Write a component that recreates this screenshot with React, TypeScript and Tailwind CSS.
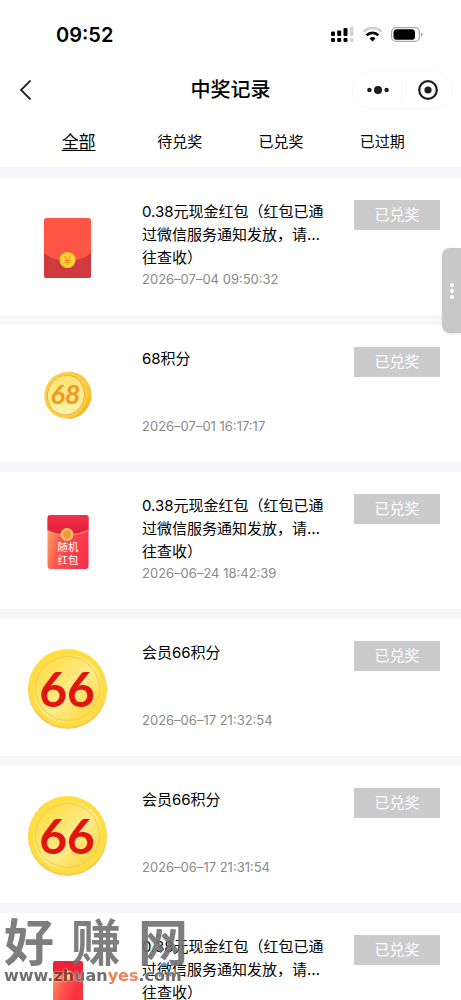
import React from 'react';

const tabs = ['全部', '待兑奖', '已兑奖', '已过期'];

type Prize = {
  icon: React.ReactNode;
  title: React.ReactNode;
  time: string;
};

function StatusIcons() {
  return (
    <svg width="92" height="18" viewBox="0 0 92 18" aria-hidden="true">
      {/* dual sim signal */}
      <g fill="#000">
        <rect x="0" y="5.5" width="4" height="4.5" rx="1" />
        <rect x="6.2" y="4.5" width="4" height="5.5" rx="1" />
        <rect x="12.5" y="2" width="4" height="8" rx="1" />
        <rect x="0" y="12" width="4" height="4" rx="1" />
        <rect x="6.2" y="12" width="4" height="4" rx="1" />
        <rect x="12.5" y="12" width="4" height="4" rx="1" />
      </g>
      <g fill="#d4d4d4">
        <rect x="18.8" y="0.5" width="3.6" height="9.5" rx="1" />
        <rect x="18.8" y="12" width="3.6" height="4" rx="1" />
      </g>
      {/* wifi */}
      <g fill="none" strokeWidth="2.6">
        <path d="M32.4 5.8a12.8 12.8 0 0 1 18.2 0" stroke="#cfcfcf" />
        <path d="M35.6 9.4a8.2 8.2 0 0 1 11.8 0" stroke="#000" />
      </g>
      <path d="M41.5 15.4l-3-3a4.3 4.3 0 0 1 6 0z" fill="#000" />
      {/* battery */}
      <rect x="60.6" y="1.6" width="27.8" height="13.8" rx="4.5" fill="none" stroke="#a8a8a8" strokeWidth="1.2" />
      <rect x="62.5" y="3.2" width="21.5" height="10.6" rx="3.4" fill="#000" />
      <path d="M90 6.5q1.8.6 1.8 2t-1.8 2z" fill="#a8a8a8" />
    </svg>
  );
}

function YuanPacket() {
  return (
    <svg width="48" height="60" viewBox="0 0 48 60">
      <rect width="47" height="60" rx="2.5" fill="#ff5546" />
      <path d="M0 35q10 8 23.5 8T47 35v22.5a2.5 2.5 0 0 1-2.500 2.500h-42A2.500 2.500 0 0 1 0 57.500z" fill="#cf3a3e" />
      <circle cx="23.5" cy="42" r="8" fill="#fed02f" />
      <path d="M20.5 38l3 4.200 3-4.200M23.500 42v5M20.800 42.500h5.400M20.800 44.600h5.400" fill="none" stroke="#e2902a" />
    </svg>
  );
}

function Coin68() {
  return (
    <svg width="48" height="48" viewBox="0 0 48 48">
      <defs>
        <linearGradient id="rim68" x1="0" y1="0" x2="1" y2="1">
          <stop offset="0" stopColor="#f9c437" />
          <stop offset="0.5" stopColor="#fbcb3c" />
          <stop offset="1" stopColor="#f8ab14" />
        </linearGradient>
        <linearGradient id="face68" x1="0" y1="0" x2="0.3" y2="1">
          <stop offset="0" stopColor="#fbe06a" />
          <stop offset="0.6" stopColor="#fcea8c" />
          <stop offset="1" stopColor="#fdf3a8" />
        </linearGradient>
      </defs>
      <g transform="rotate(14 24 24)">
        <ellipse cx="25" cy="24" rx="22.5" ry="23.5" fill="url(#rim68)" />
        <ellipse cx="22" cy="24.5" rx="21.5" ry="23" fill="#fdcf48" />
        <ellipse cx="22" cy="24.5" rx="18.5" ry="20" fill="url(#face68)" stroke="#eda93a" strokeWidth="0.9" />
      </g>
      <text x="21.5" y="33" textAnchor="middle" fontSize="27" fontStyle="italic" fontWeight="700" fill="#f0991c" className="font-['Lato',sans-serif]">68</text>
    </svg>
  );
}

function RandomPacket() {
  return (
    <svg width="42" height="54" viewBox="0 0 42 54">
      <defs>
        <linearGradient id="packetBody" x1="0" y1="0.3" x2="1" y2="0.6">
          <stop offset="0" stopColor="#ffa062" />
          <stop offset="0.35" stopColor="#fb5350" />
          <stop offset="1" stopColor="#f8304c" />
        </linearGradient>
        <linearGradient id="packetFlap" x1="0" y1="0" x2="0" y2="1">
          <stop offset="0" stopColor="#f03048" />
          <stop offset="1" stopColor="#e01f3a" />
        </linearGradient>
      </defs>
      <rect x="0.5" width="41" height="54" rx="3" fill="url(#packetBody)" />
      <path d="M.5 3a3 3 0 0 1 3-3h35a3 3 0 0 1 3 3v12.500Q32 20 20.500 20T.5 15.500z" fill="url(#packetFlap)" />
      <path d="M.5 15.500Q9 20 20.500 20T41.500 15.500" fill="none" stroke="#fda877" />
      <circle cx="20" cy="19.5" r="6.5" fill="#f9bd68" />
      <circle cx="20" cy="19.5" r="4.2" fill="#e99a3c" />
      <g fill="#fff" fontSize="10.5" textAnchor="middle" className="font-['Noto_Sans_CJK_SC',sans-serif]">
        <text x="21" y="36">随机</text>
        <text x="21" y="49">红包</text>
      </g>
    </svg>
  );
}

function SmallPacket() {
  return (
    <svg width="30" height="44" viewBox="0 0 30 44">
      <defs>
        <linearGradient id="smallBody" x1="0" y1="0.2" x2="0.8" y2="0.6">
          <stop offset="0" stopColor="#ff9a62" />
          <stop offset="0.5" stopColor="#fc5a4c" />
          <stop offset="1" stopColor="#f9343f" />
        </linearGradient>
      </defs>
      <rect width="30" height="44" rx="2.5" fill="url(#smallBody)" />
      <path d="M0 2.500A2.500 2.500 0 0 1 2.500 0h25A2.500 2.500 0 0 1 30 2.500V11q-7 4-15 4T0 11z" fill="#ec2236" />
      <circle cx="15" cy="14" r="4.5" fill="#f9bd68" />
    </svg>
  );
}

function Coin66({ id }: { id: string }) {
  return (
    <svg width="80" height="82" viewBox="0 0 80 82">
      <defs>
        <linearGradient id={id} x1="0" y1="0" x2="1" y2="1">
          <stop offset="0.1" stopColor="#fedc40" />
          <stop offset="0.35" stopColor="#fee468" />
          <stop offset="0.55" stopColor="#ffeb8c" />
          <stop offset="0.75" stopColor="#fede58" />
          <stop offset="1" stopColor="#fdd43a" />
        </linearGradient>
      </defs>
      <circle cx="39.5" cy="41.5" r="39.5" fill="#f5c95c" />
      <circle cx="39.5" cy="40" r="39" fill="#ffdd3e" />
      <circle cx="39.5" cy="40.5" r="35" fill={`url(#${id})`} />
      <circle cx="39.5" cy="40.5" r="32" fill="none" stroke="#f2c63c" strokeWidth="0.9" />
      <text x="39" y="59" textAnchor="middle" fontSize="48" fontWeight="700" fill="#e0150f" className="font-['Lato',sans-serif]">66</text>
    </svg>
  );
}

const cashTitle = (
  <>
    0.38元现金红包（红包已通
    <br />
    过微信服务通知发放，请…
    <br />
    往查收）
  </>
);

const prizes: Prize[] = [
  { icon: <YuanPacket />, title: cashTitle, time: '2026–07–04 09:50:32' },
  { icon: <Coin68 />, title: '68积分', time: '2026–07–01 16:17:17' },
  { icon: <RandomPacket />, title: cashTitle, time: '2026–06–24 18:42:39' },
  { icon: <Coin66 id="coinA" />, title: '会员66积分', time: '2026–06–17 21:32:54' },
  { icon: <Coin66 id="coinB" />, title: '会员66积分', time: '2026–06–17 21:31:54' },
  { icon: <SmallPacket />, title: cashTitle, time: '' },
];

function PrizeRow({ icon, title, time }: Prize) {
  return (
    <li className="flex shrink-0 items-start bg-white pt-[22px] pb-7 pl-7 pr-[21px]">
      <div className="-mb-3 flex h-24 w-20 shrink-0 items-center justify-center">{icon}</div>
      <div className="ml-[34px] flex h-[87px] min-w-0 flex-1 flex-col justify-between">
        <h2 className="whitespace-nowrap text-[15px] leading-[23px] text-black">{title}</h2>
        {time && <time className="text-[13px] leading-4 text-[#8a8a8a]">{time}</time>}
      </div>
      <button type="button" className="h-[30px] w-[86px] shrink-0 bg-[#cbcbcb] text-[15px] leading-[30px] text-white">
        已兑奖
      </button>
    </li>
  );
}

export default function App() {
  return (
    <div className="relative flex h-screen flex-col overflow-hidden bg-white font-['Inter','Noto_Sans_CJK_SC',sans-serif] text-black">
      <div className="flex h-[70px] shrink-0 items-center justify-between pl-14 pr-[38px]">
        <span className="text-[20px] font-semibold leading-6">09:52</span>
        <StatusIcons />
      </div>

      <header className="grid h-10 shrink-0 grid-cols-[1fr_auto_1fr] items-center px-2">
        <button type="button" aria-label="返回" className="ml-2 w-5">
          <svg width="20" height="20" viewBox="0 0 20 20" fill="none" stroke="#222" strokeWidth="1.8">
            <path d="M14.5 0.5L5 10l9.5 9.5" />
          </svg>
        </button>
        <h1 className="text-[20px] font-medium leading-7">中奖记录</h1>
        <div className="flex h-[38px] w-[101px] items-center justify-self-end rounded-full border border-[#f9f9f9]">
          <button type="button" aria-label="更多" className="flex h-6 flex-1 items-center justify-center border-r border-[#f7f7f7]">
            <svg width="24" height="10" viewBox="0 0 24 10" fill="#1c1c1c">
              <circle cx="3.4" cy="5" r="2.2" />
              <circle cx="12" cy="5" r="4" />
              <circle cx="20.6" cy="5" r="2.2" />
            </svg>
          </button>
          <button type="button" aria-label="关闭" className="flex h-6 flex-1 items-center justify-center">
            <svg width="22" height="22" viewBox="0 0 22 22">
              <circle cx="11" cy="11" r="8.8" fill="none" stroke="#1c1c1c" strokeWidth="2.2" />
              <circle cx="11" cy="11" r="3.6" fill="#1c1c1c" />
            </svg>
          </button>
        </div>
      </header>

      <nav className="grid h-[57px] shrink-0 grid-cols-4 items-center px-7 pt-[6px]">
        {tabs.map((tab, i) => (
          <button
            key={tab}
            type="button"
            className={i === 0 ? 'text-[17px] leading-6 underline underline-offset-2' : 'text-[15px] leading-6'}
          >
            {tab}
          </button>
        ))}
      </nav>

      <ul className="flex min-h-0 flex-1 flex-col gap-[10px] overflow-y-auto bg-[#f8f8fa] pt-[11px] [scrollbar-width:none]">
        {prizes.map((prize, i) => (
          <PrizeRow key={i} {...prize} />
        ))}
      </ul>

      {/* floating drawer handle */}
      <button
        type="button"
        aria-label="展开"
        className="absolute right-0 top-[248px] flex h-[85px] w-[19px] flex-col items-center justify-center gap-[2px] rounded-l-lg bg-[#c8c8c8] shadow-sm"
      >
        <span className="size-1 rounded-full bg-white" />
        <span className="size-1 rounded-full bg-white" />
        <span className="size-1 rounded-full bg-white" />
      </button>

      {/* site watermark */}
      <div className="pointer-events-none absolute bottom-4 left-1 w-[184px] text-[#707070]">
        <p className="mb-1 flex justify-between font-['Noto_Sans_CJK_SC',sans-serif] text-[50px] font-bold leading-[50px] opacity-90">
          <span>好</span>
          <span>赚</span>
          <span>网</span>
        </p>
        <p className="whitespace-nowrap font-['DejaVu_Sans',sans-serif] text-[16px] font-bold leading-4 [text-shadow:0_0_2px_#fff]">
          www.<span className="text-[#8c3a2c]">zh</span>uan<span className="text-[#f0825a]">yes</span>.com
        </p>
      </div>
    </div>
  );
}
